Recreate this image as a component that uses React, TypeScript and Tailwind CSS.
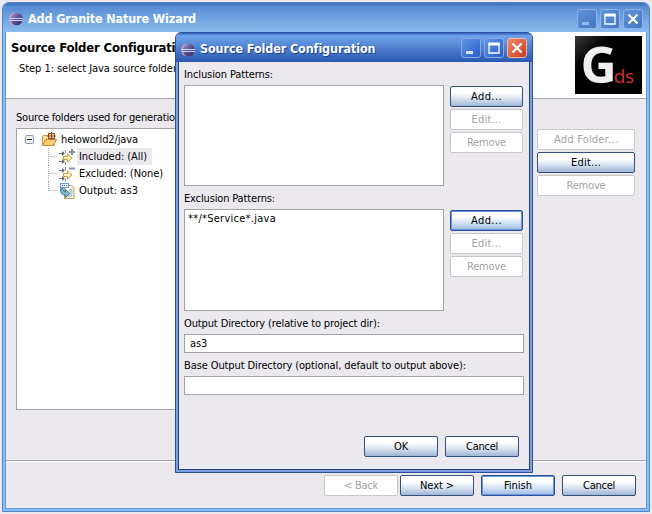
import { useLayoutEffect, useRef, useState, type ReactNode } from "react";

/** Text whose tracking is adjusted so that it spans exactly `w` pixels. */
function T({ w, className = "", children }: { w: number; className?: string; children: string }) {
  const ref = useRef<HTMLSpanElement>(null);
  const [ls, setLs] = useState(0);
  useLayoutEffect(() => {
    if (ref.current) {
      const natural = ref.current.getBoundingClientRect().width;
      setLs((w - natural) / children.length);
    }
  }, []);
  return (
    <span ref={ref} className={`inline-block w-fit shrink-0 whitespace-pre ${className}`} style={{ letterSpacing: ls }}>
      {children}
    </span>
  );
}

type Kind = "normal" | "default" | "disabled";

const looks: Record<Kind, string> = {
  normal: "border-[#34507c] bg-linear-to-b from-white from-30% via-[#dbe5f2] via-60% to-[#9fb6d4]",
  default: "border-[#2a519c] bg-linear-to-b from-white from-30% via-[#d5e4f7] via-60% to-[#9dbbe3] shadow-[inset_0_0_0_1px_#6a94d8]",
  disabled: "border-[#c9c7c9] bg-white text-[#a3a2a4]",
};

function Btn({ kind = "normal", w, size = "w-[73px]", children }: { kind?: Kind; w: number; size?: string; children: string }) {
  return (
    <button className={`flex h-[21px] shrink-0 items-center justify-center rounded-[2px] border leading-none ${size} ${looks[kind]}`}>
      <T w={w}>{children}</T>
    </button>
  );
}

function Eclipse() {
  return (
    <svg width="15" height="14" viewBox="0 0 15 14" className="shrink-0">
      <defs>
        <linearGradient id="ecl" x1="0" y1="0" x2="1" y2="1">
          <stop offset="0" stopColor="#b0a4d4" />
          <stop offset=".5" stopColor="#5a4f92" />
          <stop offset="1" stopColor="#352c68" />
        </linearGradient>
      </defs>
      <ellipse cx="6" cy="7" rx="5.8" ry="6.2" fill="#d8a8b8" />
      <ellipse cx="7.6" cy="7" rx="6.2" ry="6.3" fill="url(#ecl)" />
      <path d="M.8 6.500h13.400M1 8.500h13" stroke="#c9d2f2" strokeWidth="1" />
    </svg>
  );
}

function Controls({ active = false }: { active?: boolean }) {
  const box = active
    ? "border-[#86a9e6] bg-linear-to-br from-[#5f93e6] to-[#2a5fc6]"
    : "border-[#8fb2e2] bg-linear-to-br from-[#5f92d8] to-[#4378c4]";
  const close = active ? "border-[#efb4a6] bg-linear-to-br from-[#ec8a6c] to-[#c93a1c]" : box;
  const base = "flex size-[20px] items-center justify-center rounded-[3px] border";
  return (
    <div className="flex gap-[3px]">
      <div className={`${base} ${box}`}>
        <svg width="18" height="18"><rect x="4" y="12" width="7" height="3" fill={active ? "#d6e4fb" : "#8fbdf2"} /></svg>
      </div>
      <div className={`${base} ${box}`}>
        <svg width="18" height="18"><path d="M4 5h10v9H4z" fill="none" stroke="#fff" strokeWidth="1.3" /><path d="M3.5 5h11" stroke="#fff" strokeWidth="3" /></svg>
      </div>
      <div className={`${base} ${close}`}>
        <svg width="18" height="18"><path d="M4.5 4.500l9 9M13.500 4.500l-9 9" stroke="#fff" strokeWidth="2.200" /></svg>
      </div>
    </div>
  );
}

function FolderIcon() {
  return (
    <svg width="16" height="16" viewBox="0 0 16 16">
      <path d="M1.500 13.500v-9l1-1h4l1 1.500h6v8.500z" fill="#fbe3a0" stroke="#c9913f" />
      <path d="M1.500 13.500l3-6h11l-3 6z" fill="#f8cd78" stroke="#c98a32" />
      <rect x="7.500" y="1.500" width="6" height="5" fill="#f3d3a2" stroke="#8b4a22" />
      <path d="M10.500 0v8M6 4h9" stroke="#8b4a22" />
    </svg>
  );
}

function FilterIcon({ plus = false }: { plus?: boolean }) {
  return (
    <svg width="17" height="16" viewBox="0 0 17 16">
      <path d="M0 4.500h4M0 12.500h4" stroke="#6c7480" />
      <path d="M3 2l3 2.500-3 2.500zM3 10l3 2.500-3 2.500z" fill="#626a78" />
      <path d="M6.500 1v3M6.500 13v3" stroke="#8a919c" />
      <path d="M4.500 7.500h4v-2.500l4.500 4-4.500 4v-2.500h-4z" fill="#fff3c4" stroke="#cf9a34" />
      <path d={plus ? "M10 3h6M13 0v6" : "M10 2.500h6"} stroke="#8a909c" strokeWidth="2.200" />
    </svg>
  );
}

function OutputIcon() {
  return (
    <svg width="16" height="16" viewBox="0 0 16 16">
      <path d="M5.500 2.500h7l2.500 2.500v10.500h-9.500z" fill="#fffbe8" stroke="#b99a5c" />
      <path d="M10 7h3.500M11 9h2.500M11 11h2.500M9 13h4.500" stroke="#7d9fd0" />
      <rect x="1.500" y=".5" width="8" height="4" fill="#e9f2ff" stroke="#6a9ad4" />
      <path d="M3 2.500h5" stroke="#3f73b8" strokeDasharray="1 1" />
      <path d="M1.500 5.500c-.5 4.500 1.500 6.500 5 6.500v2.500l4.500-4-4.500-4v2.500c-1.500 0-2.500-1-2.500-3.500z" fill="#82bcc4" stroke="#2f6f92" strokeWidth=".9" />
    </svg>
  );
}

function TreeRow({ icon, w, label, selected = false, last = false }: { icon: ReactNode; w: number; label: string; selected?: boolean; last?: boolean }) {
  return (
    <div className="flex h-[17px] items-center pl-[31px]">
      <svg width="11" height="17" className="shrink-0">
        <path d={last ? "M.5 0v9M.5 8.500h10" : "M.5 0v17M.5 8.500h10"} stroke="#a5a5a5" strokeDasharray="1 1" fill="none" />
      </svg>
      <div className="w-[18px] shrink-0">{icon}</div>
      <div className={`flex h-[17px] items-center pl-[2px] pr-[5px] ${selected ? "bg-[#ebe9ed]" : ""}`}>
        <T w={w}>{label}</T>
      </div>
    </div>
  );
}

function Dialog() {
  return (
    <div className="absolute left-[175px] top-[32px] flex h-[441px] w-[358px] flex-col overflow-hidden rounded-t-[6px] border border-[#2c5099] bg-[#7d9fdb]">
      <div className="flex h-[29px] shrink-0 items-center justify-between bg-linear-to-b from-[#2f63be] via-[#6fa3ea] via-10% to-[#2b57b0] pl-[5px] pr-[5px]">
        <div className="flex items-center gap-[4px] pt-[4px]">
          <Eclipse />
          <T w={175} className="text-[12.5px] leading-none font-bold text-white [text-shadow:1px_1px_0_#1c3f86]">
            Source Folder Configuration
          </T>
        </div>
        <div className="pt-[1px]"><Controls active /></div>
      </div>
      <div className="mx-[2px] mb-[2px] flex grow flex-col border-x border-b border-[#1f3f80] bg-[#ebe9ed] pl-[5px] pr-[5px]">
        <div className="flex h-[23px] items-center pt-[2px]"><T w={89}>Inclusion Patterns:</T></div>
        <div className="flex gap-[6px]">
          <div className="h-[101px] w-[260px] border border-[#a3a1a4] bg-white" />
          <div className="flex flex-col gap-[2px] pt-[1px]">
            <Btn w={31}>Add...</Btn>
            <Btn w={30} kind="disabled">Edit...</Btn>
            <Btn w={39} kind="disabled">Remove</Btn>
          </div>
        </div>
        <div className="flex h-[23px] items-center pt-[2px]"><T w={91}>Exclusion Patterns:</T></div>
        <div className="flex gap-[6px]">
          <div className="h-[102px] w-[260px] border border-[#a3a1a4] bg-white pl-[3px] pt-[2px]"><T w={88}>**/*Service*.java</T></div>
          <div className="flex flex-col gap-[2px] pt-[1px]">
            <Btn w={31} kind="default">Add...</Btn>
            <Btn w={30} kind="disabled">Edit...</Btn>
            <Btn w={39} kind="disabled">Remove</Btn>
          </div>
        </div>
        <div className="flex h-[23px] items-center pt-[2px]"><T w={196}>Output Directory (relative to project dir):</T></div>
        <div className="flex h-[19px] w-[340px] items-center border border-[#a3a1a4] bg-white pl-[5px] pt-px"><T w={17}>as3</T></div>
        <div className="flex h-[23px] items-center pt-[2px]"><T w={282}>Base Output Directory (optional, default to output above):</T></div>
        <div className="h-[19px] w-[340px] border border-[#a3a1a4] bg-white" />
        <div className="mt-[41px] flex justify-end gap-[7px] pr-[5px]">
          <Btn w={14} size="w-[74px]">OK</Btn>
          <Btn w={32} size="w-[74px]">Cancel</Btn>
        </div>
      </div>
    </div>
  );
}

export default function App() {
  return (
    <div className="relative h-[514px] w-[652px] overflow-hidden bg-[#ebe9ed] pl-[2px] pt-[2px] font-['DejaVu_Sans_Condensed','DejaVu_Sans',sans-serif] text-[11px] leading-[14px] text-black">
      <div className="flex h-[510px] w-[648px] flex-col overflow-hidden rounded-t-[7px] border border-[#5286c8] bg-[#86bdf4]">
        <div className="flex h-[29px] shrink-0 items-center justify-between bg-linear-to-b from-[#3d6db4] via-[#5b8fd6] via-15% to-[#8bbcee] pl-[6px] pr-[6px]">
          <div className="flex items-center gap-[4px] pt-[3px]">
            <Eclipse />
            <T w={168} className="text-[12.5px] leading-none font-bold text-white">Add Granite Nature Wizard</T>
          </div>
          <div className="pt-[2px]"><Controls /></div>
        </div>
        <div className="mx-[2px] mb-[2px] flex grow flex-col border-x border-b border-[#5f97d8] bg-[#ebe9ed]">
          <div className="flex h-[67px] shrink-0 justify-between border-b border-[#a3a1a4] bg-white pr-[4px] pt-[4px]">
            <div className="flex flex-col pl-[5px] pt-[5px]">
              <T w={180} className="text-[13px] leading-[14px] font-bold">Source Folder Configuration</T>
              <T w={163} className="ml-[8px] mt-[7px]">Step 1: select Java source folders</T>
            </div>
            <div className="flex h-[58px] w-[67px] items-baseline justify-center bg-linear-to-br from-[#3c3c3c] via-black via-40% to-black pr-[3px] font-['Open_Sans',sans-serif] leading-[56px]">
              <span className="text-[50px] font-bold tracking-[-3px] text-[#f1eeee]">G</span>
              <span className="text-[19px] font-medium tracking-[-0.5px] text-[#d8302c]">ds</span>
            </div>
          </div>
          <div className="flex h-[362px] shrink-0 gap-[6px] border-b border-[#a3a1a4] pl-[10px] pr-[11px]">
            <div className="flex w-[515px] flex-col pt-[12px]">
              <T w={168}>Source folders used for generation:</T>
              <div className="mt-[3px] h-[282px] border border-[#a3a1a4] bg-white pt-[2px]">
                <div className="flex h-[17px] items-center pl-[8px]">
                  <svg width="9" height="9" className="mr-[7px]"><rect x=".5" y=".5" width="8" height="8" rx="1" fill="#f3f1ee" stroke="#8398b4" /><path d="M2 4.500h5" stroke="#222" /></svg>
                  <FolderIcon />
                  <T w={77} className="ml-[4px]">heloworld2/java</T>
                </div>
                <TreeRow icon={<FilterIcon plus />} w={68} label="Included: (All)" selected />
                <TreeRow icon={<FilterIcon />} w={84} label="Excluded: (None)" />
                <TreeRow icon={<OutputIcon />} w={59} label="Output: as3" last />
              </div>
            </div>
            <div className="flex flex-col gap-[2px] pt-[30px]">
              <Btn w={64} size="w-[98px]" kind="disabled">Add Folder...</Btn>
              <Btn w={30} size="w-[98px]">Edit...</Btn>
              <Btn w={39} size="w-[98px]" kind="disabled">Remove</Btn>
            </div>
          </div>
          <div className="flex grow justify-end border-t border-white pr-[10px] pt-[13px]">
            <Btn w={34} kind="disabled" size="w-[74px] mr-[2px]">{"< Back"}</Btn>
            <Btn w={34} size="w-[74px] mr-[7px]">{"Next >"}</Btn>
            <Btn w={28} size="w-[74px] mr-[7px]" kind="default">Finish</Btn>
            <Btn w={32} size="w-[74px]">Cancel</Btn>
          </div>
        </div>
      </div>
      <Dialog />
    </div>
  );
}
